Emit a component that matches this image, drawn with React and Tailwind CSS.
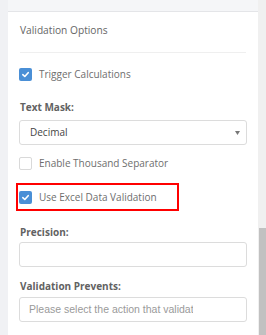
import React from 'react';

const Check = ({ checked }) => (
  <span
    className={`flex h-[13px] w-[13px] shrink-0 items-center justify-center rounded-[2px] ${
      checked ? 'bg-[#4a8fd6]' : 'border border-[#d9d9d9] bg-white'
    }`}
  >
    {checked && (
      <svg width="9" height="9" viewBox="0 0 10 10">
        <path d="M2 5.2 L4.2 7.2 L8 3" fill="none" stroke="white" strokeWidth="1.8" strokeLinecap="round" strokeLinejoin="round" />
      </svg>
    )}
  </span>
);

const CheckRow = ({ checked, label }) => (
  <div className="flex h-[13px] items-center gap-[7px]">
    <Check checked={checked} />
    <span className="text-[10px] leading-[13px] text-[#6e6e6e]">{label}</span>
  </div>
);

const Label = ({ children, className = '' }) => (
  <div className={`pl-[1px] text-[10px] font-bold leading-[14px] text-[#626262] ${className}`}>{children}</div>
);

export default function App() {
  return (
    <div className="flex h-[335px] w-[266px] overflow-hidden bg-[#f0f1f4] font-['Open_Sans',sans-serif]">
      <div className="ml-[8px] flex w-[250px] flex-col bg-white">
        <div className="h-[12px] shrink-0 border-b border-[#e4e5e8] bg-[#f5f6f8]" />
        <div className="px-[11px]">
          <div className="pt-[10px] pb-[14px] pl-[1px] text-[10.2px] leading-[16px] text-[#666]">Validation Options</div>
          <div className="mx-[1px] border-t border-[#efefef]" />
          <div className="mt-[15px]">
            <CheckRow checked label="Trigger Calculations" />
          </div>
          <Label className="mt-[19px]">Text Mask:</Label>
          <div className="mt-[6px] flex h-[25px] items-center justify-between rounded-[3px] border border-[#dcdcdc] pl-[10px] pr-[6px]">
            <span className="text-[10px] text-[#444]">Decimal</span>
            <svg width="5" height="4" viewBox="0 0 5 4">
              <path d="M0 0 H5 L2.5 4 Z" fill="#777" />
            </svg>
          </div>
          <div className="mt-[12px]">
            <CheckRow label="Enable Thousand Separator" />
          </div>
          <div className="mt-[13px] ml-[-3px] w-[163px] border-2 border-[#ff0000] pt-[6px] pb-[5px] pl-[1px]">
            <CheckRow checked label="Use Excel Data Validation" />
          </div>
          <Label className="mt-[14px]">Precision:</Label>
          <div className="mt-[3px] h-[25px] rounded-[3px] border border-[#dcdcdc]" />
          <Label className="mt-[12px]">Validation Prevents:</Label>
          <div className="mt-[4px] flex h-[25px] items-center rounded-[3px] border border-[#dcdcdc] pl-[9px]">
            <span className="w-[164px] overflow-hidden whitespace-nowrap font-['Liberation_Sans',sans-serif] text-[10.5px] text-[#9a9a9a]">
              Please select the action that validation prevents
            </span>
          </div>
        </div>
      </div>
      <div className="flex w-[8px] flex-col bg-[#f0f0f0]">
        <div className="h-[228px]" />
        <div className="ml-[1px] flex-1 bg-[#c1c1c1]" />
      </div>
    </div>
  );
}
